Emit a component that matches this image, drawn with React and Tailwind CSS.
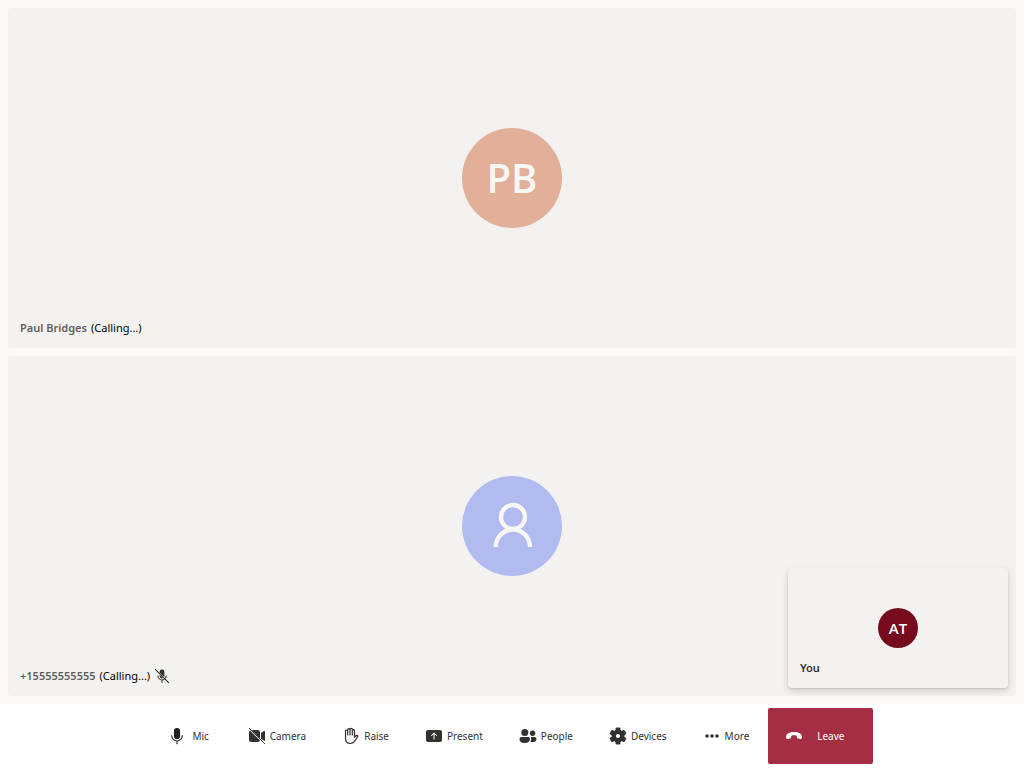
import React from "react";

function Icon({ size = "size-5", children }) {
  return (
    <svg className={`${size} shrink-0`} viewBox="0 0 20 20" fill="currentColor" aria-hidden="true">
      {children}
    </svg>
  );
}

const MicIcon = () => (
  <Icon>
    <rect x="6.900" y="1.900" width="6.200" height="11.200" rx="3.100" fill="#201f1e" />
    <path d="M4.700 9.700a5.300 5.300 0 0 0 10.600 0M10 15.100V17.700" fill="none" stroke="currentColor" strokeWidth="1.200" strokeLinecap="round" />
  </Icon>
);

const CameraOffIcon = () => (
  <Icon>
    <path d="M4.600 4H10.500a2.500 2.500 0 0 1 2.500 2.500v5.900zM3 4.400l10.100 10.100A2.500 2.500 0 0 1 11 16H4.500A2.500 2.500 0 0 1 2 13.500v-7c0-.9.400-1.600 1-2.100zM14 6.900l2.800-1.900c.5-.4 1.200 0 1.200.6v8.800c0 .3-.1.500-.3.700L14 12.900z" />
    <path d="M2.300 2.300l15.400 15.400" fill="none" stroke="currentColor" strokeWidth="1" strokeLinecap="round" />
  </Icon>
);

const HandIcon = () => (
  <Icon>
    <path
      d="M4.500 9.500V5.300a1.100 1.100 0 0 1 2.200 0V9M6.700 9V3.700a1.150 1.150 0 0 1 2.300 0V9M9 9V3.500a1.150 1.150 0 0 1 2.300 0V9M11.300 9V4.700a1.100 1.100 0 0 1 2.200 0v6.600l1-1.200c.6-.7 1.700-.8 2.500-.2l-2.700 4.300c-1.300 2.200-2.400 3.300-5.100 3.300-3.400 0-4.700-2.600-4.700-5.200V9"
      fill="none"
      stroke="currentColor"
      strokeWidth="1.200"
      strokeLinecap="round"
      strokeLinejoin="round"
    />
  </Icon>
);

const PresentIcon = () => (
  <Icon>
    <path
      fillRule="evenodd"
      d="M4 4h12a2 2 0 0 1 2 2v8a2 2 0 0 1-2 2H4a2 2 0 0 1-2-2V6c0-1.100.9-2 2-2zm6.350 2.650a.5.5 0 0 0-.7 0l-2.500 2.500a.5.5 0 0 0 .7.7L9.500 8.200v4.800a.5.5 0 0 0 1 0V8.200l1.650 1.650a.5.5 0 0 0 .7-.7z"
    />
  </Icon>
);

const PeopleIcon = () => (
  <Icon>
    <circle cx="6.800" cy="6.500" r="3.500" />
    <circle cx="14.600" cy="7.300" r="2.700" />
    <path d="M3.500 11H10a2 2 0 0 1 2 2c0 2.700-2.200 4-5.200 4s-5.300-1.300-5.300-4a2 2 0 0 1 2-2z" />
    <path d="M12.900 11h3.600a2 2 0 0 1 2 2c0 2-1.500 3.100-3.900 3.100-.8 0-1.500-.1-2.100-.4.400-.7.600-1.500.6-2.700 0-.8-.100-1.500-.2-2z" />
  </Icon>
);

const SettingsIcon = () => (
  <Icon>
    <circle cx="10" cy="10" r="4.300" fill="none" stroke="currentColor" strokeWidth="4.400" />
    {[0, 60, 120, 180, 240, 300].map((angle) => (
      <rect key={angle} x="7.600" y="1.400" width="4.800" height="5" rx="1" transform={`rotate(${angle} 10 10)`} />
    ))}
  </Icon>
);

const MoreIcon = () => (
  <Icon>
    <circle cx="5" cy="10" r="1.800" />
    <circle cx="10" cy="10" r="1.800" />
    <circle cx="15" cy="10" r="1.800" />
  </Icon>
);

const HangUpIcon = () => (
  <Icon>
    <path d="M2 10.600C2.300 7.800 5.600 6.100 10 6.100s7.700 1.700 8 4.500c.1 1.600-.5 2.600-1.700 2.400l-2.200-.4c-.7-.1-1.100-.6-1.200-1.300l-.2-1.400C12 9.400 11 9.300 10 9.300s-2 .1-2.700.6l-.2 1.400c-.1.700-.5 1.200-1.200 1.300L3.700 13c-1.200.2-1.800-.8-1.700-2.400z" />
  </Icon>
);

const MicOffIcon = () => (
  <Icon size="size-4">
    <path d="M7 5.600V5a3 3 0 0 1 6 0v5c0 .5-.1.900-.3 1.300zM7 8.400l4.600 4.200A3 3 0 0 1 7 10z" />
    <path d="M1.700 1.700l16.600 16.600M4.900 10a5.100 5.100 0 0 0 8.300 3.900M10 15.100V18M15.100 10c0 .9-.2 1.700-.6 2.500" fill="none" stroke="currentColor" strokeWidth="1.300" strokeLinecap="round" />
  </Icon>
);

const PersonIcon = () => (
  <svg className="size-12" viewBox="0 0 48 48" fill="none" stroke="currentColor" strokeWidth="4.300" aria-hidden="true">
    <circle cx="25" cy="15" r="12" />
    <path d="M7.700 45a17.150 17.500 0 0 1 34.300 0" />
  </svg>
);

const controls = [
  { label: "Mic", icon: MicIcon },
  { label: "Camera", icon: CameraOffIcon },
  { label: "Raise", icon: HandIcon },
  { label: "Present", icon: PresentIcon },
  { label: "People", icon: PeopleIcon },
  { label: "Devices", icon: SettingsIcon },
  { label: "More", icon: MoreIcon },
];

function Tile({ avatar, avatarClass, name, muted }) {
  return (
    <section className="grid min-h-0 flex-1 grid-rows-[1fr_auto_1fr] justify-items-center rounded bg-[#f3f2f1]">
      <div className={`row-start-2 flex size-25 items-center justify-center rounded-full font-['Open_Sans',sans-serif] text-[40px] font-semibold text-[#f8f7f6] ${avatarClass}`}>
        {avatar}
      </div>
      <div className="row-start-3 flex items-center gap-1 self-end justify-self-start px-3 py-3 text-[11px] leading-4 text-black">
        <span className="font-semibold text-[#605e5c]">{name}</span>
        <span>(Calling...)</span>
        {muted && <span className="text-[#323130]"><MicOffIcon /></span>}
      </div>
    </section>
  );
}

export default function App() {
  return (
    <div className="flex h-screen flex-col bg-white font-['Noto_Sans','Open_Sans',sans-serif] text-[#323130]">
      <main className="relative flex min-h-0 flex-1 flex-col gap-2 bg-[#faf9f8] p-2">
        <Tile avatar="PB" avatarClass="bg-[#e2b098]" name="Paul Bridges" />
        <Tile avatar={<PersonIcon />} avatarClass="bg-[#b2bbf0]" name="+15555555555" muted />
        <aside className="absolute right-4 bottom-4 grid h-30 w-55 grid-rows-[1fr_auto_1fr] justify-items-center rounded bg-[#f3f2f1] shadow-[0_3px_7px_rgba(0,0,0,0.14),0_1px_2px_rgba(0,0,0,0.11)]">
          <div className="row-start-2 flex size-10 items-center justify-center rounded-full bg-[#750b1c] font-['Open_Sans',sans-serif] text-[15px] font-semibold text-white">
            AT
          </div>
          <span className="row-start-3 self-end justify-self-start px-3 py-3 text-[11px] leading-4 font-semibold">You</span>
        </aside>
      </main>
      <footer className="flex h-16 items-center justify-center py-1">
        {controls.map(({ label, icon: Glyph }) => (
          <button key={label} type="button" className="flex h-full min-w-20 items-center px-4 text-[10px] leading-4">
            <Glyph />
            <span className="flex-1 px-[3px] text-center">{label}</span>
          </button>
        ))}
        <button type="button" className="flex h-full w-[105px] items-center rounded-xs bg-[#a42e43] px-4 text-[10px] leading-4 text-white">
          <HangUpIcon />
          <span className="flex-1 text-center">Leave</span>
        </button>
      </footer>
    </div>
  );
}
